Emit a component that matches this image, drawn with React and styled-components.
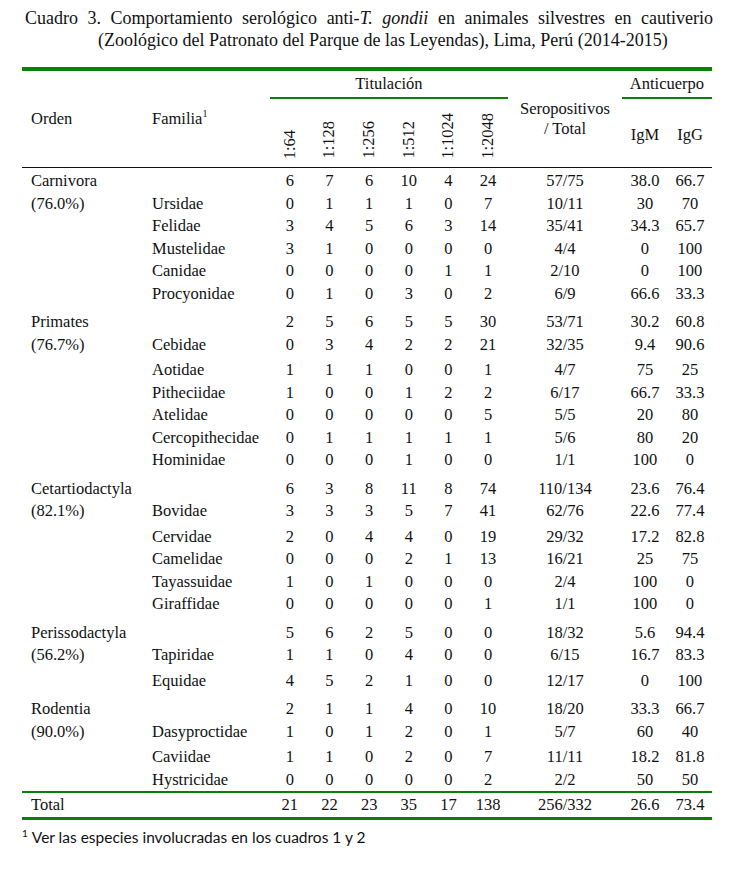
import React from "react";
import styled, { createGlobalStyle } from "styled-components";

const GREEN = "#0a7f0a";

const GlobalStyle = createGlobalStyle`
  body {
    margin: 0;
    background: #ffffff;
    color: #111111;
    font-family: "Liberation Serif", "Times New Roman", serif;
  }
`;

const Page = styled.div`
  width: 738px;
  padding: 7px 0 0 22px;
  box-sizing: border-box;
`;

const Caption = styled.p`
  margin: 0;
  width: 691px;
  font-size: 18px;
  line-height: 22px;
  text-align: justify;
  padding-left: 76px;
  text-indent: -73px;
  box-sizing: border-box;
`;

const Table = styled.table`
  margin-top: 16px;
  width: 690px;
  table-layout: fixed;
  border-collapse: separate;
  border-spacing: 0;
  border-top: 4px solid ${GREEN};
  border-bottom: 3.5px solid ${GREEN};
  font-size: 16.5px;
`;

const HeadCell = styled.th`
  font-weight: normal;
  padding: 0;
  vertical-align: middle;
  text-align: ${(p) => (p.$left ? "left" : "center")};
  padding-left: ${(p) => (p.$left ? "9px" : "0")};
  line-height: 20px;
  border-bottom: ${(p) =>
    p.$group ? `2px solid ${GREEN}` : "1px solid #111111"};
  height: ${(p) => (p.$group ? "26px" : "auto")};
  padding-top: ${(p) => p.$pt || 0}px;
`;

const Rotated = styled.span`
  display: inline-block;
  writing-mode: vertical-rl;
  transform: rotate(180deg);
  line-height: 20px;
`;

const TitreHead = styled(HeadCell)`
  height: 65px;
  vertical-align: bottom;
  padding-bottom: 3px;
`;

const Sup = styled.sup`
  font-size: 10px;
  line-height: 0;
  vertical-align: 7px;
`;

const Cell = styled.td`
  padding: 0;
  padding-top: ${(p) => p.$pt || 0}px;
  height: 22.5px;
  line-height: 20px;
  vertical-align: middle;
  white-space: nowrap;
  text-align: ${(p) => (p.$left ? "left" : "center")};
  padding-left: ${(p) => (p.$left ? "9px" : "0")};
`;

const TotalCell = styled(Cell)`
  height: 24px;
  border-top: 2px solid ${GREEN};
`;

const Note = styled.p`
  margin: 8px 0 0 0;
  font-family: Lato, "Open Sans", sans-serif;
  font-size: 15.5px;
  line-height: 18px;
`;

const NoteSup = styled.sup`
  font-size: 10px;
  line-height: 0;
  vertical-align: 6px;
  margin-right: 4px;
`;

const titres = ["1:64", "1:128", "1:256", "1:512", "1:1024", "1:2048"];

const groups = [
  {
    orden: "Carnivora",
    pct: "(76.0%)",
    top: 2,
    loose: false,
    rows: [
      ["", [6, 7, 6, 10, 4, 24], "57/75", "38.0", "66.7"],
      ["Ursidae", [0, 1, 1, 1, 0, 7], "10/11", "30", "70"],
      ["Felidae", [3, 4, 5, 6, 3, 14], "35/41", "34.3", "65.7"],
      ["Mustelidae", [3, 1, 0, 0, 0, 0], "4/4", "0", "100"],
      ["Canidae", [0, 0, 0, 0, 1, 1], "2/10", "0", "100"],
      ["Procyonidae", [0, 1, 0, 3, 0, 2], "6/9", "66.6", "33.3"],
    ],
  },
  {
    orden: "Primates",
    pct: "(76.7%)",
    top: 6,
    loose: true,
    rows: [
      ["", [2, 5, 6, 5, 5, 30], "53/71", "30.2", "60.8"],
      ["Cebidae", [0, 3, 4, 2, 2, 21], "32/35", "9.4", "90.6"],
      ["Aotidae", [1, 1, 1, 0, 0, 1], "4/7", "75", "25"],
      ["Pitheciidae", [1, 0, 0, 1, 2, 2], "6/17", "66.7", "33.3"],
      ["Atelidae", [0, 0, 0, 0, 0, 5], "5/5", "20", "80"],
      ["Cercopithecidae", [0, 1, 1, 1, 1, 1], "5/6", "80", "20"],
      ["Hominidae", [0, 0, 0, 1, 0, 0], "1/1", "100", "0"],
    ],
  },
  {
    orden: "Cetartiodactyla",
    pct: "(82.1%)",
    top: 6,
    loose: true,
    rows: [
      ["", [6, 3, 8, 11, 8, 74], "110/134", "23.6", "76.4"],
      ["Bovidae", [3, 3, 3, 5, 7, 41], "62/76", "22.6", "77.4"],
      ["Cervidae", [2, 0, 4, 4, 0, 19], "29/32", "17.2", "82.8"],
      ["Camelidae", [0, 0, 0, 2, 1, 13], "16/21", "25", "75"],
      ["Tayassuidae", [1, 0, 1, 0, 0, 0], "2/4", "100", "0"],
      ["Giraffidae", [0, 0, 0, 0, 0, 1], "1/1", "100", "0"],
    ],
  },
  {
    orden: "Perissodactyla",
    pct: "(56.2%)",
    top: 6,
    loose: true,
    rows: [
      ["", [5, 6, 2, 5, 0, 0], "18/32", "5.6", "94.4"],
      ["Tapiridae", [1, 1, 0, 4, 0, 0], "6/15", "16.7", "83.3"],
      ["Equidae", [4, 5, 2, 1, 0, 0], "12/17", "0", "100"],
    ],
  },
  {
    orden: "Rodentia",
    pct: "(90.0%)",
    top: 6,
    loose: true,
    rows: [
      ["", [2, 1, 1, 4, 0, 10], "18/20", "33.3", "66.7"],
      ["Dasyproctidae", [1, 0, 1, 2, 0, 1], "5/7", "60", "40"],
      ["Caviidae", [1, 1, 0, 2, 0, 7], "11/11", "18.2", "81.8"],
      ["Hystricidae", [0, 0, 0, 0, 0, 2], "2/2", "50", "50"],
    ],
  },
];

const totals = [21, 22, 23, 35, 17, 138];

function GroupRows({ group }) {
  return group.rows.map((row, i) => {
    const [familia, vals, sero, igm, igg] = row;
    let pt = 0;
    if (i === 0) pt = group.top;
    if (i === 2 && group.loose) pt = 3;
    const orden = i === 0 ? group.orden : i === 1 ? group.pct : "";
    return (
      <tr key={i}>
        <Cell $left $pt={pt}>{orden}</Cell>
        <Cell $left $pt={pt}>{familia}</Cell>
        {vals.map((v, j) => (
          <Cell key={j} $pt={pt}>{v}</Cell>
        ))}
        <Cell $pt={pt}>{sero}</Cell>
        <Cell $pt={pt}>{igm}</Cell>
        <Cell $pt={pt}>{igg}</Cell>
      </tr>
    );
  });
}

export default function App() {
  return (
    <Page>
      <GlobalStyle />
      <Caption>
        Cuadro 3. Comportamiento serológico anti-<i>T. gondii</i> en animales
        silvestres en cautiverio (Zoológico del Patronato del Parque de las
        Leyendas), Lima, Perú (2014-2015)
      </Caption>
      <Table>
        <colgroup>
          <col style={{ width: 121 }} />
          <col style={{ width: 127 }} />
          {titres.map((t) => (
            <col key={t} style={{ width: 39.67 }} />
          ))}
          <col style={{ width: 114 }} />
          <col style={{ width: 46 }} />
          <col style={{ width: 44 }} />
        </colgroup>
        <thead>
          <tr>
            <HeadCell rowSpan={2} $left>
              Orden
            </HeadCell>
            <HeadCell rowSpan={2} $left>
              Familia<Sup>1</Sup>
            </HeadCell>
            <HeadCell colSpan={6} $group>
              Titulación
            </HeadCell>
            <HeadCell rowSpan={2}>
              Seropositivos
              <br />/ Total
            </HeadCell>
            <HeadCell colSpan={2} $group>
              Anticuerpo
            </HeadCell>
          </tr>
          <tr>
            {titres.map((t) => (
              <TitreHead key={t}>
                <Rotated>{t}</Rotated>
              </TitreHead>
            ))}
            <HeadCell $pt={4}>IgM</HeadCell>
            <HeadCell $pt={4}>IgG</HeadCell>
          </tr>
        </thead>
        <tbody>
          {groups.map((g) => (
            <GroupRows key={g.orden} group={g} />
          ))}
          <tr>
            <TotalCell $left>Total</TotalCell>
            <TotalCell />
            {totals.map((v, j) => (
              <TotalCell key={j}>{v}</TotalCell>
            ))}
            <TotalCell>256/332</TotalCell>
            <TotalCell>26.6</TotalCell>
            <TotalCell>73.4</TotalCell>
          </tr>
        </tbody>
      </Table>
      <Note>
        <NoteSup>1</NoteSup>Ver las especies involucradas en los cuadros 1 y 2
      </Note>
    </Page>
  );
}
